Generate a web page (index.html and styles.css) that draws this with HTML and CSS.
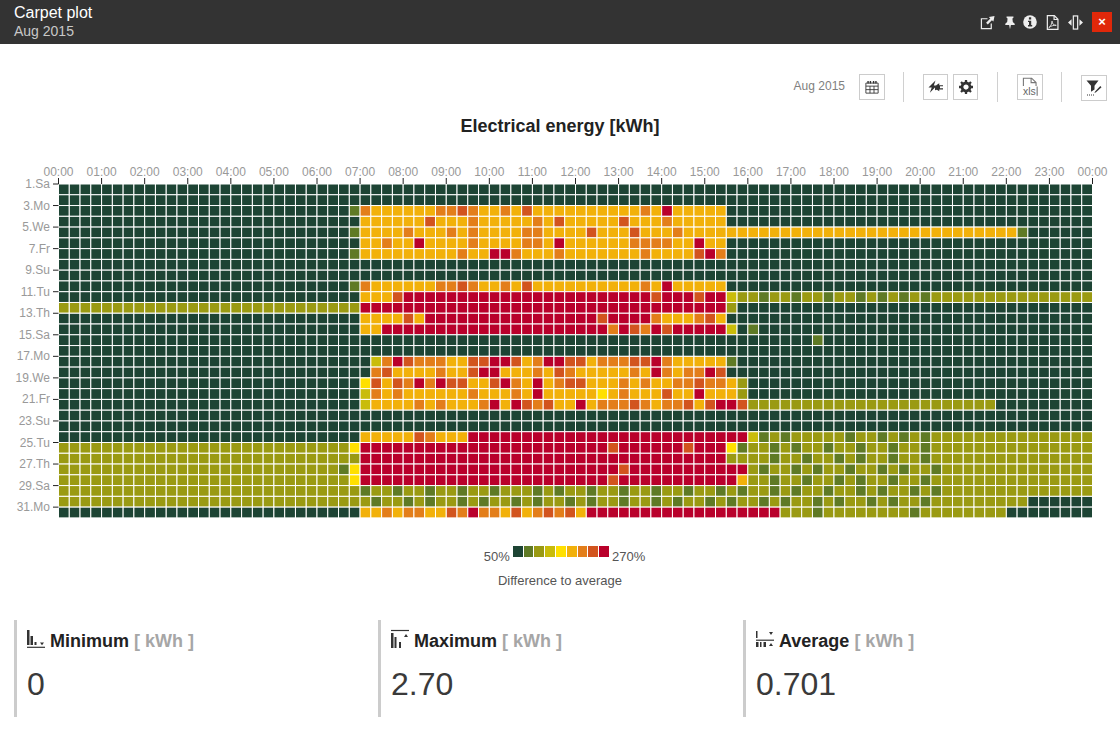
FILE: index.html
```html
<!DOCTYPE html>
<html lang="en">
<head>
<meta charset="utf-8">
<title>Carpet plot</title>
<link rel="stylesheet" href="styles.css">
</head>
<body>
<header class="topbar">
  <div class="topbar-titles">
    <div class="topbar-title">Carpet plot</div>
    <div class="topbar-sub">Aug 2015</div>
  </div>
  <div class="topbar-icons">
    <svg class="ticon share" viewBox="0 0 16 16"><path class="wline" d="M8 4H1.500V14.500H12V9"/><path class="wfill" d="M15.500 1L9.500 2.200 11 3.800 6.500 8.200 8.300 10 12.700 5.500 14.300 7z"/></svg>
    <svg class="ticon pin" viewBox="0 0 14 16"><path class="wfill" d="M3 1H11V2.500L9.800 3.300 10.300 7.500 12.500 9.500V11H8L7 16 6 11H1.500V9.500L3.700 7.500 4.200 3.300 3 2.500z"/></svg>
    <svg class="ticon info" viewBox="0 0 14 14"><circle class="wfill" cx="7" cy="7" r="6.800"/><rect class="dfill" x="5.900" y="2.300" width="2.300" height="2.200"/><path class="dfill" d="M5 5.700H8.200V10H9.200V11.500H5V10H6V7H5z"/></svg>
    <svg class="ticon pdf" viewBox="0 0 13 16"><path class="wline" d="M1 .7H8.500L12.300 4.500V15.300H1z"/><path class="wline" d="M8.200 .7V4.800H12.300"/><path class="wthin" d="M2.500 13.500C4.500 12.500 6 9 6 6.500 6 9.500 8 11 10.500 11 8 10.800 5 11.500 2.500 13.500z"/></svg>
    <svg class="ticon resize" viewBox="0 0 16 16"><rect class="wline" x="5.700" y="1" width="4.600" height="14"/><path class="wfill" d="M0 8L3.800 4.500V11.500zM16 8L12.200 4.500V11.500z"/></svg>
    <div class="closebtn">&#215;</div>
  </div>
</header>

<div class="toolbar">
  <span class="toolbar-date">Aug 2015</span>
  <div class="tbtn">
    <svg class="bicon cal" viewBox="0 0 16 16"><path class="dline" d="M1 3.500H15V15H1zM1 7H15M1 11H15M5.700 7V15M10.300 7V15"/><path class="dline2" d="M3.500 1V4M6.200 1V4M9.800 1V4M12.500 1V4"/></svg>
  </div>
  <div class="sep sep-a"></div>
  <div class="tbtn tbtn-narrow">
    <svg class="bicon plug" viewBox="0 0 16 14"><path class="dfill" d="M8 0L.500 7.500H4L2 13 9.500 5.500H6.200z"/><path class="dfill" d="M9.500 4.500L12 3V5H16V6.300H12.800V8.300H16V9.600H12V11.500L9.500 10 7.500 10.500V7z"/></svg>
  </div>
  <div class="tbtn tbtn-narrow">
    <svg class="bicon gear" viewBox="0 0 16 16"><path class="dring" d="M8 3.400A4.600 4.600 0 1 1 8 12.600 4.600 4.600 0 1 1 8 3.400z"/><path class="dspoke" d="M8 0V3M8 13V16M0 8H3M13 8H16M2.300 2.300L4.500 4.500M11.500 11.500L13.700 13.700M2.300 13.700L4.500 11.500M11.500 4.500L13.700 2.300"/></svg>
  </div>
  <div class="sep sep-b"></div>
  <div class="tbtn">
    <svg class="bicon xls" viewBox="0 0 20 20"><path class="gline" d="M4 9V2H11.500L15.500 6V9M15.500 6H11V2"/><text class="xlstext" x="9.500" y="17.500">xls</text><path class="gline" d="M16.500 9.500V18"/></svg>
  </div>
  <div class="sep sep-c"></div>
  <div class="tbtn tbtn-low">
    <svg class="bicon filt" viewBox="0 0 18 18"><path class="dfill" d="M1.500 1.500H13.500L9.500 6.800V10.500L6 12.800V6.800z"/><path class="dfill" d="M15.300 7L16.500 8.200 11 13.300 9.400 14 10.100 12.400z"/><path class="ddot" d="M2 16H9"/></svg>
  </div>
</div>

<h1 class="chart-title">Electrical energy [kWh]</h1>

<svg id="carpet" class="carpet" viewBox="0 0 1120 362"></svg>

<div class="legend">
  <div class="legend-row">
    <span class="legend-label">50%</span>
    <div class="legend-bar">
      <i class="sw s0"></i><i class="sw s1"></i><i class="sw s2"></i><i class="sw s3"></i><i class="sw s4"></i><i class="sw s5"></i><i class="sw s6"></i><i class="sw s7"></i><i class="sw s8"></i>
    </div>
    <span class="legend-label">270%</span>
  </div>
  <div class="legend-note">Difference to average</div>
</div>

<section class="stats">
  <div class="stat">
    <div class="stat-head">
      <svg class="sicon" viewBox="0 0 19 20"><path class="kfill" d="M0 1H2.500V16H0zM3.500 7H6V16H3.500zM7.500 13H9.500V16H7.500z"/><path class="kline" d="M0 18.300H18"/><path class="kfill" d="M13 13.500H17L15 16.200z"/></svg>
      <span class="stat-name">Minimum</span>
      <span class="stat-unit">[ kWh ]</span>
    </div>
    <div class="stat-value">0</div>
  </div>
  <div class="stat">
    <div class="stat-head">
      <svg class="sicon" viewBox="0 0 19 20"><path class="kline" d="M0 1.500H18"/><path class="kfill" d="M0 4H2.500V19H0zM3.500 8H5.500V19H3.500zM8 13H10V19H8z"/><path class="kfill" d="M13 8H17L15 5z"/></svg>
      <span class="stat-name">Maximum</span>
      <span class="stat-unit">[ kWh ]</span>
    </div>
    <div class="stat-value">2.70</div>
  </div>
  <div class="stat">
    <div class="stat-head">
      <svg class="sicon" viewBox="0 0 19 20"><path class="kfill" d="M0 2H1.500V9H0zM0 13H2.500V18H0zM4 13H5.500V18H4zM7.500 13H10V18H7.500z"/><path class="kline" d="M0 11.200H18"/><path class="kfill" d="M13 3H17L15 6zM13 17H17L15 14z"/></svg>
      <span class="stat-name">Average</span>
      <span class="stat-unit">[ kWh ]</span>
    </div>
    <div class="stat-value">0.701</div>
  </div>
</section>
<script src="carpet.js"></script>
</body>
</html>
```

FILE: styles.css
```css
* { box-sizing: border-box; }
html, body { margin: 0; padding: 0; }
body {
  width: 1120px;
  height: 756px;
  overflow: hidden;
  background: #fff;
  font-family: "Liberation Sans", Arial, sans-serif;
  color: #333;
}

/* top bar */
.topbar {
  height: 44px;
  background: #333;
  display: flex;
  justify-content: space-between;
  align-items: center;
  padding: 0 8px 0 14px;
}
.topbar-titles { display: flex; flex-direction: column; margin-top: -1px; }
.topbar-title { font-size: 16px; line-height: 18px; color: #fff; }
.topbar-sub { font-size: 14px; line-height: 18px; color: #c8c8c8; }
.topbar-icons { display: flex; align-items: center; }
.ticon { display: block; height: 15px; margin-right: 9px; }
.ticon.share { width: 15px; }
.ticon.pin { width: 12px; margin-right: 7px; }
.ticon.info { width: 14px; height: 14px; }
.ticon.pdf { width: 13px; }
.ticon.resize { width: 15px; }
.wline { fill: none; stroke: #eee; stroke-width: 1.3; }
.wthin { fill: none; stroke: #eee; stroke-width: .9; }
.wfill { fill: #eee; }
.dfill { fill: #333; }
.closebtn {
  width: 20px;
  height: 20px;
  background: #e0280a;
  color: #fff;
  font-size: 13px;
  font-weight: bold;
  line-height: 20px;
  text-align: center;
}

/* toolbar */
.toolbar {
  display: flex;
  align-items: center;
  justify-content: flex-end;
  height: 28px;
  margin-top: 29px;
  padding-right: 13px;
}
.toolbar-date { font-size: 12px; color: #808080; margin-right: 14px; margin-top: -3px; }
.tbtn {
  width: 26px;
  height: 26px;
  border: 1px solid #ccc;
  display: flex;
  align-items: center;
  justify-content: center;
}
.tbtn-narrow { width: 25px; margin-left: 5px; }
.tbtn-low { margin-top: 2px; }
.sep { width: 1px; height: 30px; background: #d0d0d0; }
.sep-a { margin: 0 14px 0 18px; }
.sep-b { margin: 0 19px 0 19px; }
.sep-c { margin: 0 19px 0 18px; }
.bicon { display: block; }
.bicon.cal { width: 14px; height: 14px; }
.bicon.plug { width: 15px; height: 14px; }
.bicon.gear { width: 14px; height: 14px; }
.bicon.xls { width: 22px; height: 22px; }
.bicon.filt { width: 18px; height: 18px; }
.dline { fill: none; stroke: #333; stroke-width: 1; }
.dline2 { fill: none; stroke: #333; stroke-width: 1.6; }
.dring { fill: none; stroke: #333; stroke-width: 3.200; }
.dspoke { fill: none; stroke: #333; stroke-width: 2.600; }
.gline { fill: none; stroke: #777; stroke-width: 1; }
.ddot { stroke: #333; stroke-width: 1; stroke-dasharray: 1 1; fill: none; }
.xlstext { font-size: 9.500px; fill: #666; text-anchor: middle; font-family: "Liberation Sans", Arial, sans-serif; }

/* title */
.chart-title {
  margin: 15px 0 0;
  height: 20px;
  font-size: 18px;
  line-height: 20px;
  font-weight: bold;
  text-align: center;
  color: #222;
}

/* carpet */
.carpet { display: block; width: 1120px; height: 362px; margin-top: 24px; }
.c0 { fill: #1d4434; }
.c1 { fill: #5f7a25; }
.c2 { fill: #9a9a12; }
.c3 { fill: #c9bc0a; }
.c4 { fill: #ffe000; }
.c5 { fill: #f2b10a; }
.c6 { fill: #e37e1a; }
.c7 { fill: #d2541e; }
.c8 { fill: #b9002b; }
.cell { stroke: #fff; stroke-width: 1; }
.axis-text { font-size: 12px; fill: #999; font-family: "Liberation Sans", Arial, sans-serif; }
.axis-text.top { text-anchor: middle; }
.axis-text.left { text-anchor: end; }
.tick { stroke: #222; stroke-width: 1; }

/* legend */
.legend { margin-top: 24px; }
.legend-row { display: flex; justify-content: center; align-items: flex-start; height: 22px; padding-left: 9px; }
.legend-label { font-size: 13px; line-height: 14px; color: #555; margin-top: 4px; }
.legend-bar { display: flex; margin: 0 3px; }
.sw { display: block; width: 9.800px; height: 11px; margin-right: 1px; }
.sw:last-child { margin-right: 0; }
.s0 { background: #1d4434; }
.s1 { background: #5f7a25; }
.s2 { background: #9a9a12; }
.s3 { background: #c9bc0a; }
.s4 { background: #ffe000; }
.s5 { background: #f2b10a; }
.s6 { background: #e37e1a; }
.s7 { background: #d2541e; }
.s8 { background: #b9002b; }
.legend-note { font-size: 13px; line-height: 14px; color: #555; text-align: center; margin-top: 6px; }

/* stats */
.stats {
  display: grid;
  grid-template-columns: 364px 365px 365px;
  margin-top: 32px;
  padding-left: 14px;
}
.stat {
  height: 97px;
  border-left: 3px solid #ccc;
  padding: 9px 0 0 10px;
}
.stat-head { display: flex; align-items: center; height: 24px; font-size: 18px; font-weight: bold; }
.sicon { width: 19px; height: 20px; margin-right: 4px; margin-bottom: 4px; display: block; }
.stat-name { color: #222; margin-right: 5px; }
.stat-unit { color: #a6a6a6; }
.stat-value { font-size: 32px; line-height: 38px; margin-top: 12px; color: #3a3a3a; }
.kfill { fill: #333; }
.kline { stroke: #333; stroke-width: 1.2; fill: none; }
```

FILE: carpet.js
```js
var rows = [
  '0:0',
  '0:0',
  '0:0 28:5 62:0|27:1 28:6 35:6 36:6 37:7 38:6 41:6 43:7 54:6 56:8',
  '0:0 28:5 62:0|34:7 38:6 44:6 46:7 52:7 56:6',
  '0:0 28:5 89:1 90:0|27:1 32:6 36:6 38:6 43:6 44:6 49:7 53:7 57:6',
  '0:0 28:5 62:0|30:6 33:8 38:6 43:6 44:6 46:8 53:6 54:6 55:6 56:6 59:8',
  '0:0 28:5 62:0|27:1 37:6 40:8 41:8 42:6 46:6 54:6 59:7 60:8 61:6',
  '0:0',
  '0:0',
  '0:0 28:5 62:0|27:1 28:6 35:6 36:6 37:7 38:6 41:6 43:7 54:6 56:8',
  '0:0 28:5 32:8 62:3 63:2|31:7 55:7 59:7 65:1 68:1 71:1 74:1 76:1 78:1 80:1',
  '0:2 28:8 62:2 63:0',
  '0:0 28:5 34:8 62:0|32:7 50:7 55:6 56:5 57:5 58:5 59:6 60:7 61:5',
  '0:0 28:5 30:8 62:3 63:0|51:6 53:7 54:6 56:7 64:1',
  '0:0|70:1',
  '0:0',
  '0:0 29:5 63:0|29:3 30:6 31:8 32:7 33:6 34:6 35:6 38:7 39:7 40:8 41:8 42:7 44:6 45:8 46:8 47:7 48:7 50:6 51:6 52:6 53:7 54:7 55:8 56:6 62:1',
  '0:0 29:5 62:0|29:6 30:7 35:6 38:7 39:8 40:8 44:6 46:7 47:6 53:6 55:8 56:6 58:6 59:6 60:8 61:7',
  '0:0 28:5 63:2 64:0|28:4 29:7 31:7 32:6 33:8 34:6 35:8 36:7 37:7 40:7 41:8 42:6 44:8 46:6 47:7 48:7 52:6 54:6 57:6 58:6 59:7 60:6 61:6',
  '0:0 28:5 63:2 64:0|28:3 29:6 31:6 38:6 42:6 44:8 50:4 52:6 56:7 59:8',
  '0:0 28:5 62:8 63:7 64:2 87:0|28:3 33:6 35:6 39:6 40:8 42:8 43:7 44:6 45:7 48:8 50:6 51:6 52:6 53:7 54:6 56:6 57:6 58:7 60:7 61:8',
  '0:0',
  '0:0',
  '0:0 28:5 38:8 64:2|33:7 34:6 64:3 65:1 67:1 73:1 76:1 78:1 80:1',
  '0:2 27:4 28:8 62:4 63:1 64:2|51:7 58:7 66:1 68:1 71:1 74:1 77:1 80:1',
  '0:2 28:8 62:2|66:1 69:1 72:1 74:1 77:1 80:1',
  '0:2 27:4 28:8 64:2|26:1 52:7 65:1 68:1 70:1 73:1 76:1 78:1 81:1',
  '0:2 27:4 28:8 63:5 64:2|51:7 66:1 69:1 72:1 74:1 77:1 80:1',
  '0:2|28:1 31:1 34:1 37:1 40:1 44:1 46:1 49:1 52:1 55:1 58:1 61:1 63:1 66:1 68:1 71:1 74:1 76:1 79:1 81:1',
  '0:2 90:0|29:1 32:1 34:1 37:1 39:1 42:1 44:1 47:1 49:1 52:1 55:1 57:1 60:1 62:1 65:1 67:1 70:1 72:1 75:1 77:1 80:1',
  '0:0 28:5 49:8 67:2 88:0|30:6 32:6 33:6 36:7 37:6 38:8 39:6 40:6 42:7 44:6 45:7 46:6 47:7 70:1 79:1'
];
var days = ['Sa', 'Su', 'Mo', 'Tu', 'We', 'Th', 'Fr'];
var NS = 'http://www.w3.org/2000/svg';
var svg = document.getElementById('carpet');
var X0 = 58.5, Y0 = 24, P = 1034 / 96;

function add(tag, attrs, text) {
  var el = document.createElementNS(NS, tag);
  for (var k in attrs) el.setAttribute(k, attrs[k]);
  if (text) el.textContent = text;
  svg.appendChild(el);
}

rows.forEach(function (spec, r) {
  var parts = spec.split('|');
  var vals = [];
  parts[0].split(' ').forEach(function (t) {
    var p = t.split(':');
    for (var c = +p[0]; c < 96; c++) vals[c] = +p[1];
  });
  if (parts[1]) parts[1].split(' ').forEach(function (t) {
    var p = t.split(':');
    vals[+p[0]] = +p[1];
  });
  vals.forEach(function (v, c) {
    add('rect', { 'class': 'cell c' + v, x: X0 + c * P, y: Y0 + r * P, width: P, height: P });
  });
});

for (var h = 0; h <= 24; h++) {
  var x = X0 + h * 4 * P;
  var hh = h === 24 ? 0 : h;
  add('text', { 'class': 'axis-text top', x: x, y: 16 }, (hh < 10 ? '0' : '') + hh + ':00');
  add('line', { 'class': 'tick', x1: x, x2: x, y1: 18, y2: 24 });
}
for (var d = 0; d < 31; d += 2) {
  var y = Y0 + d * P;
  add('text', { 'class': 'axis-text left', x: 50, y: y + 4 }, (d + 1) + '.' + days[d % 7]);
  add('line', { 'class': 'tick', x1: 53, x2: 58.500, y1: y, y2: y });
}
```
